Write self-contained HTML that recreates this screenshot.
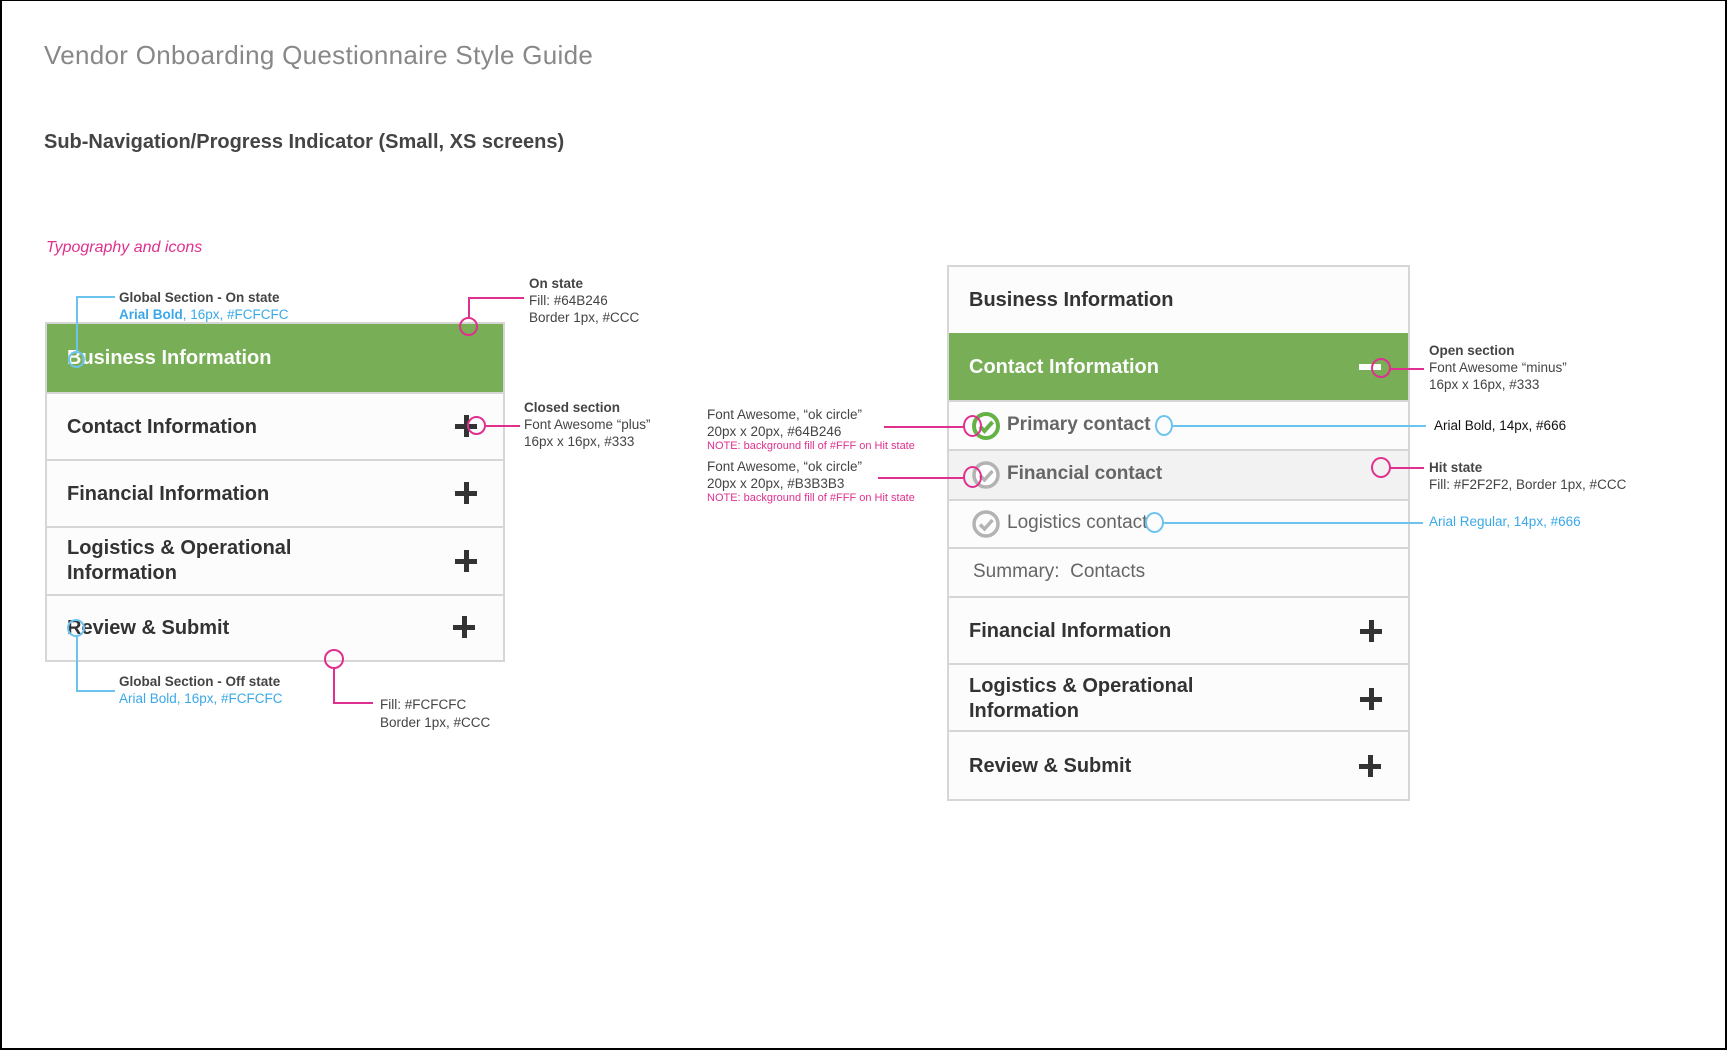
<!DOCTYPE html>
<html><head><meta charset="utf-8"><style>
*{margin:0;padding:0;box-sizing:border-box}
body{width:1727px;height:1050px;background:#fff;position:relative;overflow:hidden;font-family:"Liberation Sans",Arial,sans-serif}
#frame{position:absolute;left:0;top:0;width:1727px;height:1050px;border:2px solid #000;border-top-width:1px}
.a{position:absolute;white-space:nowrap}
.t{font-size:13.5px;color:#444;line-height:17px}
.b{font-weight:bold}
.blue{color:#3aa8e8}
.pink{color:#e0308f}
.row{position:absolute;left:0;width:100%;border-top:2px solid #d6d6d6;background:#fcfcfc}
.panel{position:absolute;box-shadow:0 0 0 2px #d6d6d6;background:#fcfcfc}
.lbl{position:absolute;left:20px;font-weight:bold;font-size:20px;color:#333;line-height:25px}
.plus{position:absolute;width:22px;height:22px}
.plus:before{content:"";position:absolute;left:0;top:8.5px;width:22px;height:5px;background:#333}
.plus:after{content:"";position:absolute;left:8.5px;top:0;width:5px;height:22px;background:#333}
.ln{position:absolute}
.c{position:absolute;border-radius:50%;border:2px solid}
</style></head><body>
<div id="frame"></div>
<div class="a" style="left:44px;top:40px;font-size:26px;color:#888;letter-spacing:0.3px">Vendor Onboarding Questionnaire Style Guide</div>
<div class="a b" style="left:44px;top:131px;font-size:20px;color:#444">Sub-Navigation/Progress Indicator (Small, XS screens)</div>
<div class="a pink" style="left:46px;top:239px;font-size:16px;font-style:italic">Typography and icons</div>

<!-- left panel -->
<div class="panel" style="left:47px;top:324px;width:456px;height:336px">
 <div class="row" style="top:0;height:68px;background:#78ae55;border-top:0"><div class="lbl" style="top:22px;color:#fcfcfc">Business Information</div></div>
 <div class="row" style="top:68px;height:67px"><div class="lbl" style="top:21px">Contact Information</div><div class="plus" style="left:408px;top:21px"></div></div>
 <div class="row" style="top:135px;height:67px"><div class="lbl" style="top:21px">Financial Information</div><div class="plus" style="left:408px;top:21px"></div></div>
 <div class="row" style="top:202px;height:68px"><div class="lbl" style="top:8px">Logistics &amp; Operational<br>Information</div><div class="plus" style="left:408px;top:22px"></div></div>
 <div class="row" style="top:270px;height:66px"><div class="lbl" style="top:20px">Review &amp; Submit</div><div class="plus" style="left:406px;top:20px"></div></div>
</div>

<!-- left annotations -->
<div class="a t b" style="left:119px;top:289px">Global Section - On state</div>
<div class="a t blue" style="left:119px;top:306px"><b>Arial Bold</b>, 16px, #FCFCFC</div>
<div class="ln" style="left:76px;top:296px;width:39px;height:55px;border-left:2px solid #6cc4ee;border-top:2px solid #6cc4ee"></div>
<div class="c" style="left:68px;top:351px;width:17px;height:17px;border-color:#6cc4ee"></div>

<div class="a t b" style="left:529px;top:275px">On state</div>
<div class="a t" style="left:529px;top:292px">Fill: #64B246</div>
<div class="a t" style="left:529px;top:309px">Border 1px, #CCC</div>
<div class="ln" style="left:468px;top:297px;width:56px;height:21px;border-left:2px solid #e0308f;border-top:2px solid #e0308f"></div>
<div class="c" style="left:459px;top:317px;width:19px;height:19px;border-color:#e0308f"></div>

<div class="a t b" style="left:524px;top:399px">Closed section</div>
<div class="a t" style="left:524px;top:416px">Font Awesome “plus”</div>
<div class="a t" style="left:524px;top:433px">16px x 16px, #333</div>
<div class="ln" style="left:486px;top:425px;width:34px;border-top:2px solid #e0308f"></div>
<div class="c" style="left:467px;top:416px;width:19px;height:19px;border-color:#e0308f"></div>

<div class="a t b" style="left:119px;top:673px">Global Section - Off state</div>
<div class="a t blue" style="left:119px;top:690px">Arial Bold, 16px, #FCFCFC</div>
<div class="ln" style="left:76px;top:636px;width:39px;height:56px;border-left:2px solid #6cc4ee;border-bottom:2px solid #6cc4ee"></div>
<div class="c" style="left:67px;top:619px;width:18px;height:18px;border-color:#6cc4ee"></div>

<div class="a t" style="left:380px;top:696px">Fill: #FCFCFC</div>
<div class="a t" style="left:380px;top:714px">Border 1px, #CCC</div>
<div class="ln" style="left:333px;top:668px;width:40px;height:36px;border-left:2px solid #e0308f;border-bottom:2px solid #e0308f"></div>
<div class="c" style="left:324px;top:649px;width:20px;height:20px;border-color:#e0308f"></div>

<!-- right panel -->
<div class="panel" style="left:949px;top:267px;width:459px;height:532px">
 <div class="row" style="top:0;height:66px;border-top:0"><div class="lbl" style="top:21px">Business Information</div></div>
 <div class="row" style="top:66px;height:67px;background:#78ae55;border-top:0"><div class="lbl" style="top:22px;color:#fcfcfc">Contact Information</div><div style="position:absolute;left:410px;top:31px;width:22px;height:6px;background:#fcfcfc"></div></div>
 <div class="row" style="top:133px;height:49px">
  <svg style="position:absolute;left:22px;top:9px" width="30" height="30" viewBox="0 0 30 30"><circle cx="15" cy="15" r="12" fill="none" stroke="#64b246" stroke-width="4"/><path d="M9 15.5l4.5 4.5 8-9" fill="none" stroke="#64b246" stroke-width="4"/></svg>
  <div class="a" style="left:58px;top:12px;font-size:19px;font-weight:bold;color:#666">Primary contact</div></div>
 <div class="row" style="top:182px;height:50px;background:#f2f2f2">
  <svg style="position:absolute;left:22px;top:9px" width="30" height="30" viewBox="0 0 30 30"><circle cx="15" cy="15" r="12" fill="#fff" stroke="#b3b3b3" stroke-width="3.5"/><path d="M9 15.5l4.5 4.5 8-9" fill="none" stroke="#b3b3b3" stroke-width="3.5"/></svg>
  <div class="a" style="left:58px;top:12px;font-size:19px;font-weight:bold;color:#666">Financial contact</div></div>
 <div class="row" style="top:232px;height:48px">
  <svg style="position:absolute;left:22px;top:8px" width="30" height="30" viewBox="0 0 30 30"><circle cx="15" cy="15" r="12" fill="none" stroke="#b3b3b3" stroke-width="3.5"/><path d="M9 15.5l4.5 4.5 8-9" fill="none" stroke="#b3b3b3" stroke-width="3.5"/></svg>
  <div class="a" style="left:58px;top:11px;font-size:19px;color:#666">Logistics contact</div></div>
 <div class="row" style="top:280px;height:49px"><div class="a" style="left:24px;top:12px;font-size:19px;color:#666">Summary:&nbsp; Contacts</div></div>
 <div class="row" style="top:329px;height:67px"><div class="lbl" style="top:21px">Financial Information</div><div class="plus" style="left:411px;top:22px"></div></div>
 <div class="row" style="top:396px;height:67px"><div class="lbl" style="top:9px">Logistics &amp; Operational<br>Information</div><div class="plus" style="left:411px;top:23px"></div></div>
 <div class="row" style="top:463px;height:69px"><div class="lbl" style="top:22px">Review &amp; Submit</div><div class="plus" style="left:410px;top:23px"></div></div>
</div>

<!-- middle annotations -->
<div class="a t" style="left:707px;top:406px">Font Awesome, “ok circle”</div>
<div class="a t" style="left:707px;top:423px">20px x 20px, #64B246</div>
<div class="a pink" style="left:707px;top:440px;font-size:11px">NOTE: background fill of #FFF on Hit state</div>
<div class="ln" style="left:884px;top:426px;width:80px;border-top:2px solid #e0308f"></div>
<div class="c" style="left:963px;top:415px;width:19px;height:22px;border-color:#e0308f"></div>

<div class="a t" style="left:707px;top:458px">Font Awesome, “ok circle”</div>
<div class="a t" style="left:707px;top:475px">20px x 20px, #B3B3B3</div>
<div class="a pink" style="left:707px;top:492px;font-size:11px">NOTE: background fill of #FFF on Hit state</div>
<div class="ln" style="left:878px;top:477px;width:86px;border-top:2px solid #e0308f"></div>
<div class="c" style="left:963px;top:466px;width:19px;height:22px;border-color:#e0308f"></div>

<!-- right annotations -->
<div class="a t b" style="left:1429px;top:342px">Open section</div>
<div class="a t" style="left:1429px;top:359px">Font Awesome “minus”</div>
<div class="a t" style="left:1429px;top:376px">16px x 16px, #333</div>
<div class="ln" style="left:1389px;top:368px;width:35px;border-top:2px solid #e0308f"></div>
<div class="c" style="left:1371px;top:358px;width:20px;height:20px;border-color:#e0308f"></div>

<div class="a t" style="left:1434px;top:417px;color:#111">Arial Bold, 14px, #666</div>
<div class="ln" style="left:1172px;top:425px;width:254px;border-top:2px solid #6cc4ee"></div>
<div class="c" style="left:1155px;top:415px;width:18px;height:21px;border-color:#6cc4ee"></div>

<div class="a t b" style="left:1429px;top:459px">Hit state</div>
<div class="a t" style="left:1429px;top:476px">Fill: #F2F2F2, Border 1px, #CCC</div>
<div class="ln" style="left:1390px;top:467px;width:34px;border-top:2px solid #e0308f"></div>
<div class="c" style="left:1371px;top:457px;width:20px;height:21px;border-color:#e0308f"></div>

<div class="a t blue" style="left:1429px;top:513px">Arial Regular, 14px, #666</div>
<div class="ln" style="left:1163px;top:522px;width:260px;border-top:2px solid #6cc4ee"></div>
<div class="c" style="left:1145px;top:512px;width:19px;height:21px;border-color:#6cc4ee"></div>
</body></html>
